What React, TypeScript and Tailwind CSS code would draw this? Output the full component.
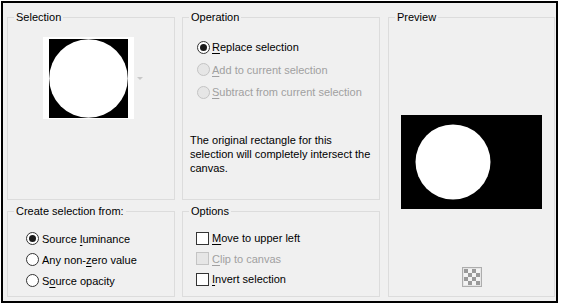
import React from "react";
import clsx from "clsx";

const Radio = ({ checked, disabled }: { checked?: boolean; disabled?: boolean }) => (
  <span
    className={clsx(
      "flex h-[13px] w-[13px] shrink-0 items-center justify-center rounded-full border",
      disabled ? "border-[#c4c4c4] bg-[#e6e6e6]" : "border-[#333333] bg-white",
    )}
  >
    {checked && <span className="h-[7px] w-[7px] rounded-full bg-[#1a1a1a]" />}
  </span>
);

const Checkbox = ({ disabled }: { disabled?: boolean }) => (
  <span
    className={clsx(
      "h-[13px] w-[13px] shrink-0 border",
      disabled ? "border-[#c4c4c4] bg-[#e6e6e6]" : "border-[#333333] bg-white",
    )}
  />
);

// Windows style group box
const Group = ({
  title,
  className,
  children,
}: {
  title: string;
  className?: string;
  children?: React.ReactNode;
}) => (
  <fieldset className={clsx("border border-[#dcdcdc]", className)}>
    <legend className="ml-[6px] px-[2px] leading-[16px] text-black">{title}</legend>
    {children}
  </fieldset>
);

const Label = ({ pre = "", u, post, disabled }: { pre?: string; u: string; post: string; disabled?: boolean }) => (
  <span className={clsx("whitespace-nowrap leading-[16px]", disabled ? "text-[#a0a0a0]" : "text-black")}>
    {pre}
    <span className="underline underline-offset-[2px]">{u}</span>
    {post}
  </span>
);

const Circle = ({ r, cx, cy, w, h }: { r: number; cx: number; cy: number; w: number; h: number }) => (
  <svg width={w} height={h} viewBox={`0 0 ${w} ${h}`} className="block">
    <rect width={w} height={h} fill="#000" />
    <circle cx={cx} cy={cy} r={r} fill="#fff" />
  </svg>
);

const Checker = () => (
  <div className="flex h-[20px] w-[20px] items-center justify-center border border-[#adadad] bg-[#e5e5e5]">
    <div className="grid grid-cols-4">
      {Array.from({ length: 16 }).map((_, i) => (
        <span
          key={i}
          className={clsx(
            "h-[4px] w-[4px]",
            (Math.floor(i / 4) + (i % 4)) % 2 === 0 ? "bg-[#9a9a9a]" : "bg-[#f4f4f4]",
          )}
        />
      ))}
    </div>
  </div>
);

export default function App() {
  return (
    <div
      className="min-h-screen bg-white pl-[1px] pt-[1px] text-[11px]"
      style={{ fontFamily: "'Liberation Sans', Arial, sans-serif" }}
    >
      <div className="flex h-[302px] w-[557px] gap-[7px] border-2 border-black bg-[#f0f0f0] pl-[4px] pt-[6px]">
        {/* left column */}
        <div className="flex w-[168px] flex-col gap-[3px]">
          <Group title="Selection" className="h-[191px]">
            <div className="ml-[35px] mt-[12px] flex items-center">
              <div className="h-[82px] w-[91px] bg-white pl-[6px] pt-[2px]">
                <Circle w={79} h={79} cx={39.5} cy={39.5} r={39.3} />
              </div>
              <span className="ml-[3px] mt-[1px] h-0 w-0 border-x-[3px] border-t-[3px] border-x-transparent border-t-[#c8c8c8]" />
            </div>
          </Group>
          <Group title="Create selection from:" className="h-[94px]">
            <div className="ml-[18px] mt-[9px] flex flex-col">
              <div className="flex h-[21px] items-center gap-[3px]">
                <Radio checked />
                <Label pre="Source " u="l" post="uminance" />
              </div>
              <div className="flex h-[21px] items-center gap-[3px]">
                <Radio />
                <Label pre="Any non-" u="z" post="ero value" />
              </div>
              <div className="flex h-[21px] items-center gap-[3px]">
                <Radio />
                <Label pre="S" u="o" post="urce opacity" />
              </div>
            </div>
          </Group>
        </div>

        {/* middle column */}
        <div className="flex w-[198px] flex-col gap-[3px]">
          <Group title="Operation" className="h-[191px]">
            <div className="ml-[14px] mt-[11px] flex flex-col">
              <div className="flex h-[22px] items-center gap-[2px]">
                <Radio checked />
                <Label u="R" post="eplace selection" />
              </div>
              <div className="flex h-[23px] items-center gap-[2px]">
                <Radio disabled />
                <Label u="A" post="dd to current selection" disabled />
              </div>
              <div className="flex h-[22px] items-center gap-[2px]">
                <Radio disabled />
                <Label u="S" post="ubtract from current selection" disabled />
              </div>
            </div>
            <p className="ml-[7px] mt-[30px] whitespace-nowrap leading-[14px] text-black">
              The original rectangle for this
              <br />
              selection will completely intersect the
              <br />
              canvas.
            </p>
          </Group>
          <Group title="Options" className="h-[94px]">
            <div className="ml-[13px] mt-[9px] flex flex-col">
              <div className="flex h-[20px] items-center gap-[3px]">
                <Checkbox />
                <Label u="M" post="ove to upper left" />
              </div>
              <div className="flex h-[21px] items-center gap-[3px]">
                <Checkbox disabled />
                <Label u="C" post="lip to canvas" disabled />
              </div>
              <div className="flex h-[20px] items-center gap-[3px]">
                <Checkbox />
                <Label u="I" post="nvert selection" />
              </div>
            </div>
          </Group>
        </div>

        {/* preview */}
        <Group title="Preview" className="ml-[1px] h-[288px] w-[167px]">
          <div className="flex flex-col items-center">
            <div className="mt-[90px]">
              <Circle w={141} h={94} cx={52} cy={47} r={37.5} />
            </div>
            <div className="mt-[58px]">
              <Checker />
            </div>
          </div>
        </Group>
      </div>
    </div>
  );
}
